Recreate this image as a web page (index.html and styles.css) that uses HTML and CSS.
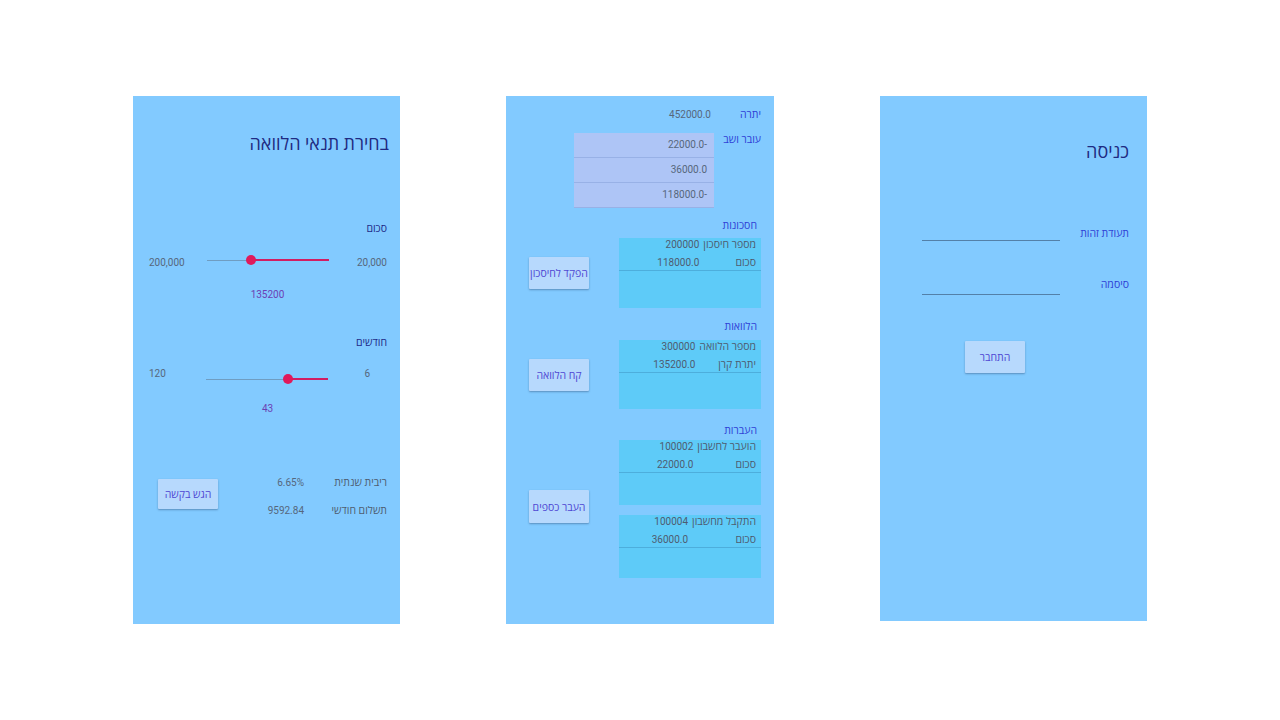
FILE: index.html
```html
<!DOCTYPE html>
<html lang="he">
<head>
<meta charset="utf-8">
<title>Bank screens</title>
<link rel="stylesheet" href="styles.css">
</head>
<body>
<main class="screens">

  <section class="phone phone-loan" dir="rtl">
    <h1 class="title">בחירת תנאי הלוואה</h1>

    <div class="field-label label-amount">סכום</div>
    <div class="slider-row row-amount">
      <span class="range-val">20,000</span>
      <div class="slider slider-amount">
        <div class="track"></div>
        <div class="track-active" style="width:64.2%"></div>
        <div class="thumb" style="right:64.2%"></div>
      </div>
      <span class="range-val">200,000</span>
    </div>
    <div class="slider-value value-amount">135200</div>

    <div class="field-label label-months">חודשים</div>
    <div class="slider-row row-months">
      <span class="range-val">6</span>
      <div class="slider slider-months">
        <div class="track"></div>
        <div class="track-active" style="width:33%"></div>
        <div class="thumb" style="right:33%"></div>
      </div>
      <span class="range-val">120</span>
    </div>
    <div class="slider-value value-months">43</div>

    <div class="summary">
      <div class="summary-grid">
        <span class="sum-label">ריבית שנתית</span>
        <span class="sum-value">6.65%</span>
        <span class="sum-label">תשלום חודשי</span>
        <span class="sum-value">9592.84</span>
      </div>
      <button class="btn btn-submit">הגש בקשה</button>
    </div>
  </section>

  <section class="phone phone-account" dir="rtl">
    <div class="acc-row row-balance">
      <span class="acc-label">יתרה</span>
      <span class="acc-value">452000.0</span>
    </div>
    <div class="acc-row row-current">
      <span class="acc-label">עובר ושב</span>
      <ul class="movements">
        <li>-22000.0</li>
        <li>36000.0</li>
        <li>-118000.0</li>
      </ul>
    </div>

    <div class="section sec-savings">
      <div class="sec-title">חסכונות</div>
      <div class="sec-body">
        <div class="stack">
          <div class="card card-savings">
            <div class="card-grid">
              <span class="c-label">מספר חיסכון</span><span class="c-value">200000</span>
              <span class="c-label c-second">סכום</span><span class="c-value c-second">118000.0</span>
            </div>
          </div>
        </div>
        <button class="btn btn-side">הפקד לחיסכון</button>
      </div>
    </div>

    <div class="section sec-loans">
      <div class="sec-title">הלוואות</div>
      <div class="sec-body">
        <div class="stack">
          <div class="card card-loans">
            <div class="card-grid">
              <span class="c-label">מספר הלוואה</span><span class="c-value">300000</span>
              <span class="c-label c-second">יתרת קרן</span><span class="c-value c-second">135200.0</span>
            </div>
          </div>
        </div>
        <button class="btn btn-side">קח הלוואה</button>
      </div>
    </div>

    <div class="section sec-transfers">
      <div class="sec-title">העברות</div>
      <div class="sec-body">
        <div class="stack">
          <div class="card card-tr-out">
            <div class="card-grid">
              <span class="c-label">הועבר לחשבון</span><span class="c-value">100002</span>
              <span class="c-label c-second">סכום</span><span class="c-value c-second">22000.0</span>
            </div>
          </div>
          <div class="card card-tr-in">
            <div class="card-grid">
              <span class="c-label">התקבל מחשבון</span><span class="c-value">100004</span>
              <span class="c-label c-second">סכום</span><span class="c-value c-second">36000.0</span>
            </div>
          </div>
        </div>
        <button class="btn btn-side btn-transfer">העבר כספים</button>
      </div>
    </div>
  </section>

  <section class="phone phone-login" dir="rtl">
    <h1 class="title title-login">כניסה</h1>
    <div class="login-row row-id">
      <label class="login-label">תעודת זהות</label>
      <div class="login-input input-id"></div>
    </div>
    <div class="login-row row-pass">
      <label class="login-label">סיסמה</label>
      <div class="login-input input-pass"></div>
    </div>
    <button class="btn btn-login">התחבר</button>
  </section>

</main>
</body>
</html>
```

FILE: styles.css
```css
html, body {
  margin: 0;
  padding: 0;
  background: #ffffff;
}

body {
  font-family: Roboto, "Open Sans", "Liberation Sans", sans-serif;
  font-size: 10.5px;
  color: #56677c;
}

.screens {
  box-sizing: border-box;
  height: 720px;
  padding-top: 96px;
  display: flex;
  justify-content: center;
  align-items: flex-start;
  gap: 106px;
}

.phone {
  background: #82caff;
  box-sizing: border-box;
  height: 528px;
  display: flex;
  flex-direction: column;
}

/* numeric texts are a touch smaller than the Hebrew labels */
.range-val,
.slider-value,
.sum-value,
.acc-value,
.movements li,
.c-value {
  font-size: 10px;
}

/* ---------- buttons ---------- */
.btn {
  font-family: inherit;
  font-size: 10.5px;
  color: #4f47d3;
  background: #b7d9fd;
  border: none;
  border-radius: 1px;
  box-shadow: 0 1px 2px rgba(40, 70, 110, 0.45);
  width: 60px;
  height: 32px;
  padding: 0;
  cursor: pointer;
}

/* ---------- loan terms screen ---------- */
.phone-loan {
  width: 267px;
  padding: 36px 11px 0 16px;
}

.title {
  margin: 0;
  font-size: 18px;
  line-height: 24px;
  font-weight: 400;
  color: #1f2a82;
}

.field-label {
  line-height: 16px;
  font-size: 10.5px;
  font-weight: 500;
  color: #1f2a88;
  padding-right: 2px;
}

.label-amount { margin-top: 65px; }
.label-months { margin-top: 32px; }

.slider-row {
  display: flex;
  align-items: flex-start;
  height: 20px;
  line-height: 16px;
  color: #56677c;
  padding-right: 2px;
}

.row-amount { margin-top: 18px; }
.row-months { margin-top: 15px; }

.row-amount .range-val:first-child { width: 58px; }
.row-amount .slider { width: 123px; margin-left: 22px; }

.row-months .range-val:first-child { width: 42px; padding-right: 17px; }
.row-months .slider { width: 124px; margin-left: 40px; }

.slider {
  position: relative;
  height: 20px;
}

.track {
  position: absolute;
  left: 0;
  right: 0;
  height: 1px;
  background: #6f9dc2;
}

.track-active {
  position: absolute;
  right: 0;
  height: 2px;
  background: #d21d62;
}

.thumb {
  position: absolute;
  width: 10px;
  height: 10px;
  margin-right: -5px;
  border-radius: 50%;
  background: #e0195b;
}

.slider-amount .track { top: 5px; }
.slider-amount .track-active { top: 4px; }
.slider-amount .thumb { top: 0; }

.slider-months .track { top: 13px; }
.slider-months .track-active { top: 12px; }
.slider-months .thumb { top: 8px; }

.slider-value {
  text-align: center;
  line-height: 16px;
  color: #6c3fb4;
  margin-left: -3px;
}

.value-amount { margin-top: 12px; }
.value-months { margin-top: 15px; }

.summary {
  display: flex;
  align-items: flex-start;
  margin-top: 58px;
  padding-right: 2px;
}

.summary-grid {
  display: grid;
  grid-template-columns: 83px auto;
  row-gap: 12px;
  line-height: 16px;
}

.sum-label { color: #4f5d70; }
.sum-value { color: #56677c; }

.btn-submit {
  margin-right: auto;
  margin-left: 9px;
  margin-top: 4px;
  height: 30px;
}

/* ---------- account screen ---------- */
.phone-account {
  width: 268px;
  padding: 11px 13px 0 0;
}

.acc-row {
  display: grid;
  grid-template-columns: 47px 140px;
}

.acc-label {
  color: #2f41d6;
  line-height: 16px;
}

.row-balance .acc-value {
  line-height: 16px;
  padding-right: 3px;
}

.row-current { margin-top: 10px; }
.row-current .acc-label { line-height: 14px; }

.movements {
  list-style: none;
  margin: 0;
  padding: 0;
  background: #aec5f6;
}

.movements li {
  height: 24px;
  line-height: 24px;
  padding-right: 7px;
  border-bottom: 1px solid #98b1e6;
}

.section { display: flex; flex-direction: column; }
.sec-savings { margin-top: 10px; }
.sec-loans { margin-top: 11px; }
.sec-transfers { margin-top: 14px; }

.sec-title {
  color: #2f41d6;
  line-height: 16px;
  padding-right: 4px;
  margin-bottom: 4px;
}

.sec-loans .sec-title { margin-bottom: 5px; }
.sec-transfers .sec-title { margin-bottom: 1px; }

.sec-body {
  display: flex;
  align-items: center;
}

.stack {
  display: flex;
  flex-direction: column;
  gap: 10px;
}

.card {
  width: 142px;
  background: #5ecbf8;
}

.card-savings { height: 70px; }
.card-loans { height: 69px; }
.card-tr-out { height: 65px; }
.card-tr-in { height: 63px; }

.card-grid {
  display: grid;
  grid-template-columns: max-content 1fr;
  column-gap: 4px;
  padding-right: 5px;
  border-bottom: 1px solid #4daedc;
  line-height: 14px;
  color: #4e5c70;
}

.c-second { padding-top: 4px; }

.btn-side { margin-right: 30px; }
.btn-transfer { margin-top: -5px; height: 33px; }

/* ---------- login screen ---------- */
.phone-login {
  width: 267px;
  height: 525px;
  padding: 44px 18px 0 0;
}

.title-login { margin-bottom: 62px; }

.login-row {
  display: flex;
  align-items: flex-start;
}

.login-label {
  width: 69px;
  line-height: 16px;
  color: #2f41d6;
}

.login-input {
  width: 138px;
  border-bottom: 1px solid #5380a8;
}

.input-id { height: 14px; }
.input-pass { height: 17px; }

.row-pass { margin-top: 35px; }

.btn-login {
  align-self: flex-end;
  margin-left: 85px;
  margin-top: 46px;
}
```
